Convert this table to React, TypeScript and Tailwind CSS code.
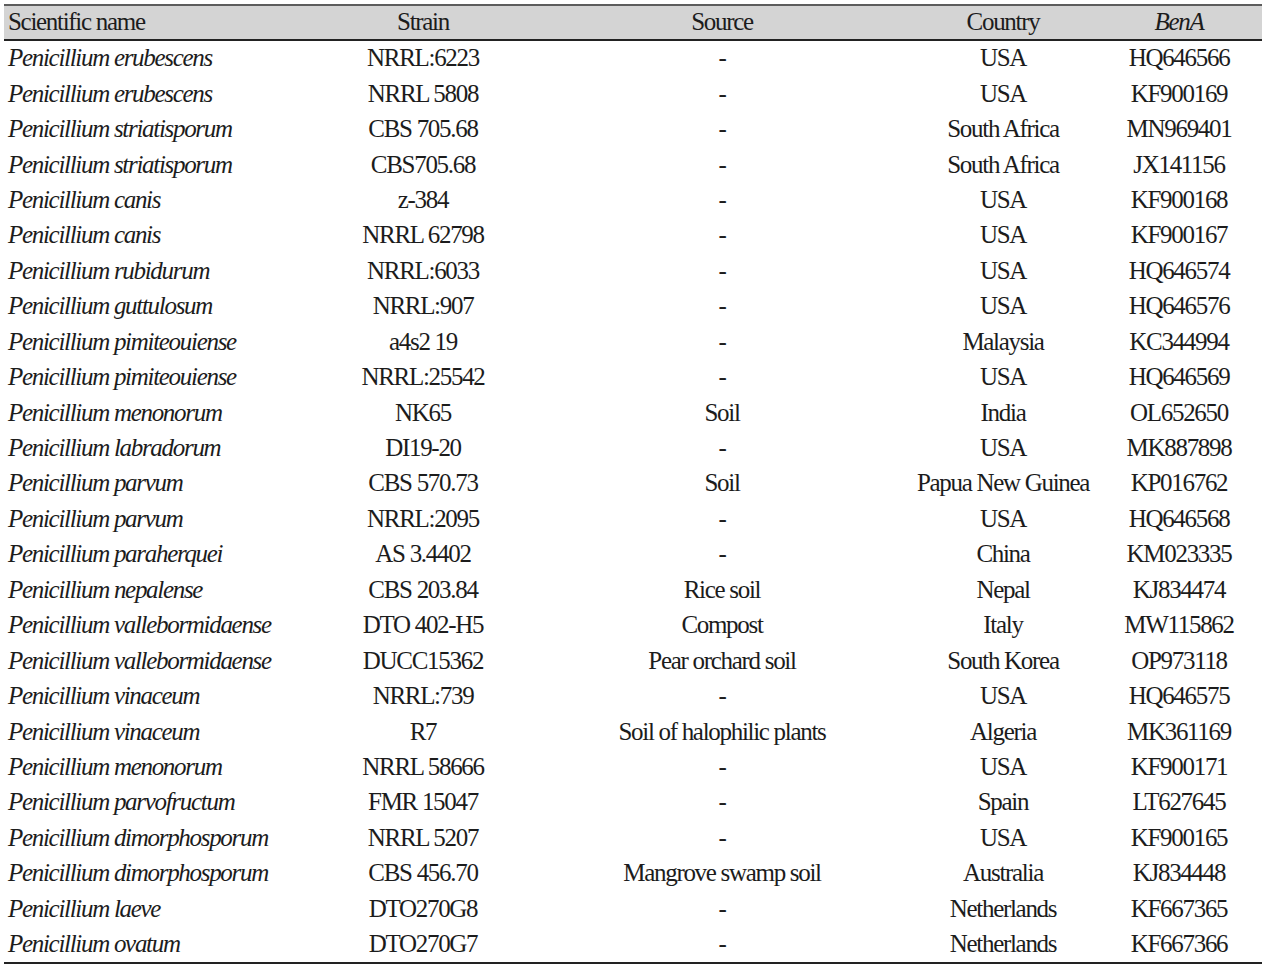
const rows: [string, string, string, string, string][] = [
  ["Penicillium erubescens", "NRRL:6223", "-", "USA", "HQ646566"],
  ["Penicillium erubescens", "NRRL 5808", "-", "USA", "KF900169"],
  ["Penicillium striatisporum", "CBS 705.68", "-", "South Africa", "MN969401"],
  ["Penicillium striatisporum", "CBS705.68", "-", "South Africa", "JX141156"],
  ["Penicillium canis", "z-384", "-", "USA", "KF900168"],
  ["Penicillium canis", "NRRL 62798", "-", "USA", "KF900167"],
  ["Penicillium rubidurum", "NRRL:6033", "-", "USA", "HQ646574"],
  ["Penicillium guttulosum", "NRRL:907", "-", "USA", "HQ646576"],
  ["Penicillium pimiteouiense", "a4s2 19", "-", "Malaysia", "KC344994"],
  ["Penicillium pimiteouiense", "NRRL:25542", "-", "USA", "HQ646569"],
  ["Penicillium menonorum", "NK65", "Soil", "India", "OL652650"],
  ["Penicillium labradorum", "DI19-20", "-", "USA", "MK887898"],
  ["Penicillium parvum", "CBS 570.73", "Soil", "Papua New Guinea", "KP016762"],
  ["Penicillium parvum", "NRRL:2095", "-", "USA", "HQ646568"],
  ["Penicillium paraherquei", "AS 3.4402", "-", "China", "KM023335"],
  ["Penicillium nepalense", "CBS 203.84", "Rice soil", "Nepal", "KJ834474"],
  ["Penicillium vallebormidaense", "DTO 402-H5", "Compost", "Italy", "MW115862"],
  ["Penicillium vallebormidaense", "DUCC15362", "Pear orchard soil", "South Korea", "OP973118"],
  ["Penicillium vinaceum", "NRRL:739", "-", "USA", "HQ646575"],
  ["Penicillium vinaceum", "R7", "Soil of halophilic plants", "Algeria", "MK361169"],
  ["Penicillium menonorum", "NRRL 58666", "-", "USA", "KF900171"],
  ["Penicillium parvofructum", "FMR 15047", "-", "Spain", "LT627645"],
  ["Penicillium dimorphosporum", "NRRL 5207", "-", "USA", "KF900165"],
  ["Penicillium dimorphosporum", "CBS 456.70", "Mangrove swamp soil", "Australia", "KJ834448"],
  ["Penicillium laeve", "DTO270G8", "-", "Netherlands", "KF667365"],
  ["Penicillium ovatum", "DTO270G7", "-", "Netherlands", "KF667366"],
];

const grid = "grid grid-cols-[308px_222px_376px_186px_166px]";
const cell = "flex items-center justify-center whitespace-nowrap";

export default function App() {
  return (
    <div className="w-[1263px] h-[970px] bg-white pt-[4px] pl-[4px] font-['Liberation_Serif',serif] text-[25px] tracking-[-1.3px] text-[#1c1c1c] leading-none">
      <div className="w-[1258px]">
        {/* Header */}
        <div className={`${grid} h-[37px] pb-[2px] bg-[#d4d4d4] border-t-2 border-t-[#5c5c5c] border-b-2 border-b-[#222]`}>
          <div className="flex items-center pl-[4px]">Scientific name</div>
          <div className={cell}>Strain</div>
          <div className={cell}>Source</div>
          <div className={cell}>Country</div>
          <div className={`${cell} italic`}>BenA</div>
        </div>

        {/* Rows */}
        {rows.map((r, i) => (
          <div key={i} className={`${grid} h-[35.45px] pb-[2px]`}>
            <div className="flex items-center pl-[4px] italic whitespace-nowrap">{r[0]}</div>
            <div className={cell}>{r[1]}</div>
            <div className={cell}>{r[2]}</div>
            <div className={cell}>{r[3]}</div>
            <div className={cell}>{r[4]}</div>
          </div>
        ))}
        <div className="h-[2px] bg-[#222]" />
      </div>
    </div>
  );
}
